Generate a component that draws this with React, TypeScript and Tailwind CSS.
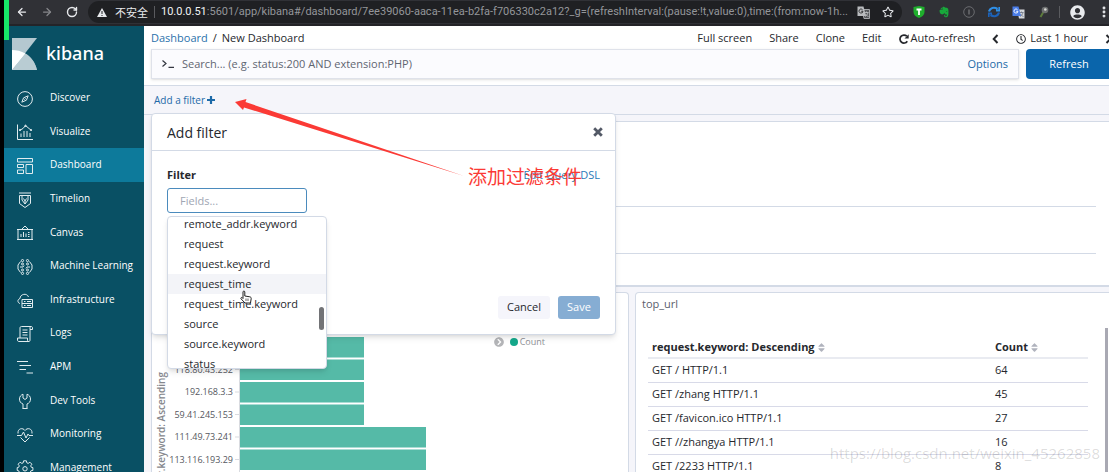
import React from "react";
import {
  FaChevronCircleRight,
  FaEvernote,
  FaRegClock,
  FaRegStar,
  FaSort,
  FaUserCircle,
} from "react-icons/fa";
import { ArrowLeft, ArrowRight, MoreVertical, RotateCw } from "lucide-react";

interface NavItem {
  label: string;
  icon: React.ReactNode;
}

const navItems: NavItem[] = [
  {
    label: "Discover",
    icon: (
      <>
        <circle cx="8" cy="8" r="7.4" />
        <path d="M11.2 4.8 9.4 9.2 4.8 11.2 6.6 6.8z M7.4 8.6l1.2-1.2" />
      </>
    ),
  },
  {
    label: "Visualize",
    icon: (
      <>
        <path d="M.5.5v15H16M4 13V9.500M7 13V7M10 13V7M13 13V9" />
        <path d="M2.500 6.500 6 4.500l2.500-3L12 4.500l2.500 2" />
        <circle cx="8.500" cy="1.800" r=".7" />
        <circle cx="3" cy="6" r=".7" />
        <circle cx="14" cy="6" r=".7" />
      </>
    ),
  },
  {
    label: "Dashboard",
    icon: (
      <path d="M.5.5h15v3.500H.5zM.5 6.500h6v3h-6zM.5 12h6v3.500h-6zM9 6.500h6.500v9H9z" />
    ),
  },
  {
    label: "Timelion",
    icon: (
      <path d="M2 1h12M2.500 3.500h11v8L8 15.500l-5.500-4zM5 4v4l3 4 3-4V4M6.500 6.500 8 9l1.500-2.500M8 9v3" />
    ),
  },
  {
    label: "Canvas",
    icon: (
      <path d="M1 4.500h14v10H1zM5 4l3-3 3 3M0 4.500h1M15 4.500h1M0 14.500h1M15 14.500h1M4 12V9M6.500 12V7M9 12V8.500M11 7.500h1.500M11 9.500h1.500M11 11.500h1.500" />
    ),
  },
  {
    label: "Machine Learning",
    icon: (
      <>
        <path d="M3.500 2.500 1 6v4l2.500 3.500M12.500 2.500 15 6v4l-2.500 3.500M3 8h3l1-1.500M13 8h-3l-1 1.500" />
        <circle cx="5.500" cy="1.600" r="1.100" />
        <circle cx="10.500" cy="1.600" r="1.100" />
        <circle cx="5.500" cy="14.400" r="1.100" />
        <circle cx="10.500" cy="14.400" r="1.100" />
        <circle cx="5.500" cy="5" r="1" />
        <circle cx="10.500" cy="5" r="1" />
        <circle cx="5.500" cy="11" r="1" />
        <circle cx="10.500" cy="11" r="1" />
      </>
    ),
  },
  {
    label: "Infrastructure",
    icon: (
      <path d="M3 11.500C.5 11 0 7.500 3 6.500 3 2 10 .5 11.500 5M5 7.500h10.500v8H5zM5 11.500h10.500M7 9.500h1.500M7 13.500h1.500M10 9.500h4M10 13.500h4" />
    ),
  },
  {
    label: "Logs",
    icon: (
      <path d="M3 12V2C3 1 3.500.5 4.500.5H14c1 0 1.500.5 1.500 1.500v1.500h-2.500V12M13 3.500V2c0-1 .5-1.500 1-1.500M.5 12h10v2c0 1 .5 1.500 1.500 1.500H2c-1 0-1.500-.5-1.500-1.500zM12 15.500c.7 0 1-.5 1-1.500v-2M5.500 4h5M5.500 6.500h5M5.500 9h5" />
    ),
  },
  {
    label: "APM",
    icon: <path d="M0 2.500h11M2.500 6.500H14M2.500 10.500H9M9.500 14H16" />,
  },
  {
    label: "Dev Tools",
    icon: (
      <path d="M6 15.500V11C3.500 10 2.500 8.500 2.500 6S4 2 6 1.200V5l2 1.500L10 5V1.200C12 2 13.500 3.500 13.500 6s-1 4-3.500 5v4.500M5.500 15.500h5" />
    ),
  },
  {
    label: "Monitoring",
    icon: (
      <path d="M1 6.500C.5 1 6 .5 8 3.500 10 .5 15.500 1 15 6.500M0 8.500h4.500L6.500 5l2.500 6 2-4 1 1.500h4M3.500 10.500 8 15l4.500-4.500" />
    ),
  },
  {
    label: "Management",
    icon: (
      <>
        <path d="M6.600.8h2.800l.4 2 1.400.6 1.700-1.200 2 2-1.200 1.700.6 1.400 1.600.3v2.800l-2 .4-.6 1.400 1.200 1.700-2 2-1.700-1.200-1.400.6-.4 1.500H6.600l-.4-1.500-1.400-.6-1.700 1.200-2-2 1.200-1.700-.6-1.400-1.500-.4V7.600l1.500-.3.6-1.400L1.100 4.200l2-2 1.700 1.200 1.400-.6z" />
        <circle cx="8" cy="8.800" r="2.200" />
      </>
    ),
  },
];

const menuLinks = ["Full screen", "Share", "Clone", "Edit"];

const fields = [
  "remote_addr.keyword",
  "request",
  "request.keyword",
  "request_time",
  "request_time.keyword",
  "source",
  "source.keyword",
  "status",
];

const bars = [
  { ip: "", width: 124 },
  { ip: "118.80.43.252", width: 124 },
  { ip: "192.168.3.3", width: 124 },
  { ip: "59.41.245.153", width: 124 },
  { ip: "111.49.73.241", width: 186 },
  { ip: "113.116.193.29", width: 186 },
];

const urls = [
  { request: "GET / HTTP/1.1", count: 64 },
  { request: "GET /zhang HTTP/1.1", count: 45 },
  { request: "GET /favicon.ico HTTP/1.1", count: 27 },
  { request: "GET //zhangya HTTP/1.1", count: 16 },
  { request: "GET /2233 HTTP/1.1", count: 8 },
];

function Chevron({ flip = false }: { flip?: boolean }) {
  return (
    <svg viewBox="0 0 7 10" className={`h-[10px] w-[7px] ${flip ? "rotate-180" : ""}`}>
      <path d="M5.500 1 1.700 5l3.800 4" fill="none" stroke="currentColor" strokeWidth="2" />
    </svg>
  );
}

function TranslateIcon({ muted = false }: { muted?: boolean }) {
  return (
    <svg viewBox="0 0 13 13" className="h-[13px] w-[13px] shrink-0">
      <path d="M5 3.500h7.500v9H7z" fill={muted ? "#55575b" : "#d5d8dc"} stroke={muted ? "#a5a7aa" : "none"} />
      <path d="M7.500 6.500h4M9.500 5.500v1M11 6.500c-.5 2-1.500 3-3 4M8.500 8c.7 1.200 1.500 2 3 2.500" fill="none" stroke={muted ? "#c4c6c9" : "#6b7280"} strokeWidth=".8" />
      <path d="M.5.5h6L9 10H.5z" fill={muted ? "#b9bbbe" : "#4a7de8"} />
      <path d="M5.600 3.800a2 2 0 1 0 .4 1.500H4.200" fill="none" stroke={muted ? "#2b2c2f" : "#fff"} strokeWidth=".9" />
    </svg>
  );
}

function BrowserBar() {
  return (
    <header className="flex h-[26px] shrink-0 items-center border-b-2 border-[#242428] bg-[#303136] text-[#e8eaed]">
      <div className="flex w-[84px] shrink-0 items-center gap-[13px] pl-3">
        <button aria-label="Back"><ArrowLeft className="h-3 w-3" strokeWidth={2.5} /></button>
        <button aria-label="Forward" className="text-[#85868a]"><ArrowRight className="h-3 w-3" strokeWidth={2.5} /></button>
        <button aria-label="Reload"><RotateCw className="h-3 w-3" strokeWidth={2.8} /></button>
      </div>
      <div className="flex h-[22px] min-w-0 flex-1 items-center rounded-full bg-[#1f2023] pr-2 pl-[9px]">
        <svg viewBox="0 0 10 9" className="h-[9px] w-[10px] shrink-0">
          <path d="M5 0l5 9H0z" fill="#e8eaed" />
          <path d="M5 3v3M5 7v1" stroke="#1f2023" />
        </svg>
        <span className="ml-2 shrink-0 font-['Noto_Sans_CJK_SC',sans-serif] text-[11px]">不安全</span>
        <span className="mx-[6px] h-3 w-px shrink-0 bg-[#5a5b5f]" />
        <span className="min-w-0 flex-1 overflow-hidden font-[Roboto,sans-serif] text-[11px] whitespace-nowrap text-[#94969a]">
          <span className="text-[#f1f3f4]">10.0.0.51</span>
          :5601/app/kibana#/dashboard/7ee39060-aaca-11ea-b2fa-f706330c2a12?_g=(refreshInterval:(pause:!t,value:0),time:(from:now-1h...
        </span>
        <TranslateIcon muted />
        <FaRegStar className="ml-3 h-3 w-3 shrink-0" />
      </div>
      <div className="grid shrink-0 grid-cols-6 place-items-center pl-1 *:w-[25px]">
        <span className="flex justify-center">
          <svg viewBox="0 0 12 12" className="h-3 w-3">
            <path d="M.5 1 6 0l5.500 1v5c0 3-2.500 5-5.500 6C3 11 .5 9 .5 6z" fill="#1fae2c" />
            <path d="M3.500 3.500h5M6 3.500V9" stroke="#fff" strokeWidth="1.800" />
          </svg>
        </span>
        <span className="flex justify-center"><FaEvernote className="h-3 w-3 text-[#18a83b]" /></span>
        <span className="flex justify-center">
          <svg viewBox="0 0 12 12" className="h-3 w-3" fill="none" stroke="#6b6c70">
            <circle cx="6" cy="6" r="5.300" />
            <path d="M6 3.500v5" strokeWidth="1.500" />
          </svg>
        </span>
        <span className="flex justify-center">
          <svg viewBox="0 0 12 12" className="h-3 w-3" fill="none" strokeWidth="2.200">
            <path d="M1 5.500C2 2 6 .5 9.500 3M8 4.500h3.500V1" stroke="#2f8fe6" />
            <path d="M11 6.500C10 10 6 11.500 2.500 9M4 7.500H.5V11" stroke="#1c62b8" />
          </svg>
        </span>
        <span className="flex justify-center"><TranslateIcon /></span>
        <span className="flex justify-center">
          <svg viewBox="0 0 12 12" className="h-3 w-3">
            <path d="M6 5 2.500 11" stroke="#5c7a3c" strokeWidth="2" />
            <circle cx="7" cy="4" r="3.300" fill="#6d6f70" />
            <circle cx="7.300" cy="3.500" r="1.300" fill="#d8d8d4" />
          </svg>
        </span>
      </div>
      <span className="ml-[3px] h-3 w-px bg-[#5a5b5f]" />
      <button aria-label="Profile" className="ml-[10px]"><FaUserCircle className="h-[15px] w-[15px]" /></button>
      <button aria-label="More" className="-mr-[2px] ml-3"><MoreVertical className="h-[14px] w-[14px]" strokeWidth={3} /></button>
    </header>
  );
}

function Sidebar() {
  return (
    <aside className="w-[140px] shrink-0 bg-[#095064] text-white">
      <div className="flex h-[55px] items-center gap-[9px] pl-2">
        <svg viewBox="0 0 25 32" className="h-8 w-[25px]">
          <path d="M0 0h25L0 32z" fill="#b4c8d0" />
          <path d="M0 12c12 0 22 8 25 20H0z" fill="#a6bec8" />
          <path d="M0 12c5 0 9 1 13.500 3.500L0 32z" fill="#fff" />
          <path d="M13.500 15.500C19 18.500 23 24 25 32H0z" fill="#b9ccd3" />
        </svg>
        <span className="font-['Noto_Sans',sans-serif] text-[18px] font-medium">kibana</span>
      </div>
      <nav className="grid h-[403px] auto-rows-fr">
        {navItems.map((item) => (
          <a
            key={item.label}
            href="#"
            className={`flex items-center gap-[17px] pl-[13px] text-[10px] ${
              item.label === "Dashboard" ? "bg-[#0d7a9b]" : ""
            }`}
          >
            <svg viewBox="0 0 16 16" className="mt-[2px] h-4 w-4 shrink-0 overflow-visible" fill="none" stroke="#e1ecef">
              {item.icon}
            </svg>
            <span className="whitespace-nowrap">{item.label}</span>
          </a>
        ))}
      </nav>
    </aside>
  );
}

function TopMenu() {
  return (
    <div className="-mr-[3px] flex h-[23px] items-center justify-between pt-[2px] pl-[7px] text-[11px] whitespace-nowrap">
      <div className="flex gap-[5px]">
        <a href="#" className="text-[#2b72ab]">Dashboard</a>
        <span>/</span>
        <span>New Dashboard</span>
      </div>
      <div className="flex items-center gap-[17px]">
        {menuLinks.map((link) => (
          <button key={link}>{link}</button>
        ))}
        <button className="flex items-center gap-[2px]">
          <svg viewBox="0 0 10 10" className="h-[10px] w-[10px]">
            <path d="M8.300 7.300A4 4 0 1 1 7.800 2.200" fill="none" stroke="currentColor" strokeWidth="1.700" />
            <path d="M9.700.3v4.200H5.500z" fill="currentColor" />
          </svg>
          Auto-refresh
        </button>
        <button aria-label="Previous range"><Chevron /></button>
        <button className="flex items-center gap-1">
          <FaRegClock className="h-[10px] w-[10px]" />
          Last 1 hour
        </button>
        <button aria-label="Next range"><Chevron flip /></button>
      </div>
    </div>
  );
}

function QueryBar() {
  return (
    <div className="-mr-[3px] mb-[6px] flex h-[30px] gap-[7px] pl-[7px] text-[11px]">
      <div className="flex min-w-0 flex-1 items-center border border-[#dfe2ea] bg-[#fbfbfe] px-[10px] shadow-sm">
        <svg viewBox="0 0 12 8" className="h-2 w-3 shrink-0" fill="none" stroke="#343741" strokeWidth="1.200">
          <path d="M.5.5 4 3.500.5 6.500M6.500 7.400H12" />
        </svg>
        <input
          aria-label="Search"
          className="ml-2 min-w-0 flex-1 bg-transparent outline-none placeholder:text-[#5f6571]"
          placeholder="Search... (e.g. status:200 AND extension:PHP)"
        />
        <a href="#" className="text-[#1d6aa8]">Options</a>
      </div>
      <button className="w-[86px] shrink-0 rounded bg-[#0a65ab] text-white">Refresh</button>
    </div>
  );
}

function FilterPopover() {
  return (
    <section className="absolute top-[27px] left-[7px] z-10 h-[222px] w-[465px] rounded border border-[#d3dae6] bg-white shadow-md">
      <div className="flex h-[37px] items-center justify-between border-b border-[#d3dae6] pr-3 pl-[15px]">
        <h2 className="text-[14px]">Add filter</h2>
        <button aria-label="Close">
          <svg viewBox="0 0 10 10" className="h-[10px] w-[10px]">
            <path d="M1.200 1.200l7.600 7.600M8.800 1.200 1.200 8.800" stroke="#535966" strokeWidth="2.800" />
          </svg>
        </button>
      </div>
      <div className="px-[15px] pt-[15px] text-[11px]">
        <div className="flex h-[18px] items-center justify-between">
          <label htmlFor="field" className="font-bold">Filter</label>
          <a href="#" className="text-[#2b7ab8]">Edit Query DSL</a>
        </div>
        <div className="relative mt-1 w-[140px]">
          <input
            id="field"
            className="h-[25px] w-full rounded-[3px] border border-[#4b8bbd] px-3 outline-none placeholder:text-[#a0a6b3]"
            placeholder="Fields..."
          />
          <ul
            role="listbox"
            aria-label="Fields"
            className="absolute top-[28px] left-0 h-[153px] w-[160px] overflow-hidden rounded border border-[#d3dae6] bg-white shadow-md"
          >
            {fields.map((field) => (
              <li
                key={field}
                role="option"
                aria-selected={field === "request_time"}
                className={`h-5 pl-4 leading-5 first:-mt-[3px] ${
                  field === "request_time" ? "bg-[#f3f4f8]" : ""
                }`}
              >
                {field}
              </li>
            ))}
            <li role="presentation" className="absolute top-[90px] right-[2px] h-[23px] w-[5px] rounded-full bg-[#727376]" />
          </ul>
          {/* Pointer over the hovered option */}
          <svg viewBox="0 0 12 14" className="absolute top-[102px] left-[73px] h-[14px] w-3">
            <path
              d="M3 8.500V2c0-1.300 1.800-1.300 1.800 0v4l5 .8c1 .2 1.500.8 1.400 1.800L10.500 13H5L1 8.800C.5 7.800 1.500 7 2.400 7.800z"
              fill="#fff"
              stroke="#222"
            />
            <path d="M6 8.500V11M8 8.500V11" stroke="#222" strokeWidth=".7" />
          </svg>
        </div>
        <div className="mt-[83px] flex h-[23px] justify-end gap-2">
          <button className="w-[52px] rounded-[3px] bg-[#f5f5fb]">Cancel</button>
          <button className="w-[42px] rounded-[3px] bg-[#86add3] text-white">Save</button>
        </div>
      </div>
    </section>
  );
}

function IpChart() {
  return (
    <svg viewBox="0 0 476 200" className="h-[200px] w-[476px]" fontFamily="'Open Sans', sans-serif">
      <text transform="translate(13 79) rotate(-90)" textAnchor="end" fontSize="10" fontWeight="600" fill="#85878d">
        remote_addr.keyword: Ascending
      </text>
      <path d="M87.500 0v200" stroke="#d9dbe0" />
      {bars.map((bar, i) => (
        <g key={i} transform={`translate(0 ${44 + i * 22.5})`}>
          <rect x="88" width={bar.width} height="20.500" fill="#55baa7" />
          <path d="M83 10h4" stroke="#d9dbe0" />
          <text x="81" y="13" textAnchor="end" fontSize="9" fill="#55575e">{bar.ip}</text>
        </g>
      ))}
    </svg>
  );
}

function UrlTable() {
  return (
    <table className="mt-[23px] w-full text-left text-[11px]">
      <thead>
        <tr className="h-[21px] border-b-2 border-[#e9ebf1]">
          <th className="px-1 font-bold">
            <span className="flex items-center gap-[2px]">
              request.keyword: Descending <FaSort className="h-[11px] w-[9px] text-[#b0b3bd]" />
            </span>
          </th>
          <th className="w-[97px] px-1 font-bold">
            <span className="flex items-center gap-[2px]">
              Count <FaSort className="h-[11px] w-[9px] text-[#b0b3bd]" />
            </span>
          </th>
        </tr>
      </thead>
      <tbody>
        {urls.map((row) => (
          <tr key={row.request} className="h-6 border-b border-[#d8dae8] leading-4">
            <td className="px-1">{row.request}</td>
            <td className="px-1">{row.count}</td>
          </tr>
        ))}
      </tbody>
    </table>
  );
}

export default function App() {
  return (
    <div className="relative flex h-screen flex-col overflow-hidden bg-black pl-1 font-['Open_Sans',sans-serif] text-[#26282d]">
      <BrowserBar />
      <div className="flex min-h-0 flex-1">
        <Sidebar />
        <main className="flex min-w-0 flex-1 flex-col bg-white">
          <TopMenu />
          <QueryBar />
          <div className="relative flex h-[30px] shrink-0 items-center border-y border-[#d3dae6] bg-[#f5f5fa] pl-[10px]">
            <button className="flex items-center gap-[2px] text-[10px] text-[#1d6aa8]">
              Add a filter
              <svg viewBox="0 0 8 8" className="h-2 w-2">
                <path d="M4 0v8M0 4h8" stroke="currentColor" strokeWidth="2.200" />
              </svg>
            </button>
            <FilterPopover />
          </div>
          <div className="-mr-1 flex min-h-0 flex-1 flex-col gap-[5px] bg-[#f5f5fa] pt-[6px] pl-[7px]">
            <div className="h-[166px] shrink-0 rounded border border-b-2 border-[#d3dae6] bg-white pr-4">
              <div className="h-[85px] border-b border-[#d3dae6]" />
              <div className="h-[47px] border-b border-[#d3dae6]" />
            </div>
            <div className="grid min-h-0 flex-1 grid-cols-2 gap-[6px]">
              <div className="relative overflow-hidden rounded-t border border-b-0 border-[#d3dae6] bg-white">
                <IpChart />
                <button className="absolute top-[42px] right-[83px] flex items-center gap-[6px] text-[9px] text-[#8d8f95]">
                  <FaChevronCircleRight className="h-[10px] w-[10px] text-[#b4b5b8]" />
                  <span className="flex items-center gap-[2px]">
                    <span className="h-2 w-2 rounded-full bg-[#14a88b]" />
                    Count
                  </span>
                </button>
              </div>
              <div className="relative overflow-hidden rounded-t border border-b-0 border-[#d3dae6] bg-white pr-6 pl-3">
                <h3 className="-ml-[6px] mt-[3px] h-[18px] text-[11px] text-[#5b606c]">top_url</h3>
                <UrlTable />
                <span className="absolute top-[35px] right-[4px] h-[200px] w-[3px] bg-[#a9a9b3]" />
              </div>
            </div>
          </div>
        </main>
      </div>

      {/* Recording marker */}
      <span className="absolute top-0 left-1 h-10 w-[5px] bg-[#17e868]" />

      {/* Annotation */}
      <svg viewBox="0 0 230 78" className="pointer-events-none absolute top-[99px] left-[235px] z-20 h-[78px] w-[230px]">
        <path d="M0 3 11.500 0 10.500 3 229 77 9 8.500 8 11z" fill="#fb3a35" />
      </svg>
      <span className="pointer-events-none absolute top-[162px] left-[468px] z-20 font-['Noto_Sans_CJK_SC',sans-serif] text-[19px] text-[#fb3a35]">
        添加过滤条件
      </span>
      <span className="pointer-events-none absolute right-[9px] bottom-[8px] z-20 text-[15px] text-black/15">
        https://blog.csdn.net/weixin_45262858
      </span>
    </div>
  );
}
